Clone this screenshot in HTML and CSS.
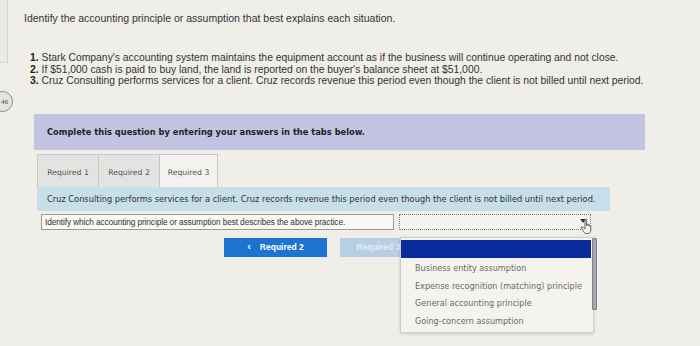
FILE: index.html
```html
<!DOCTYPE html>
<html lang="en">
<head>
    <meta charset="UTF-8">
    <title>Question 46</title>
    <link rel="stylesheet" href="styles.css">
</head>
<body>
    <div class="side-panel"></div>
    <div class="q-badge">46</div>

    <div class="content">
        <h1 class="prompt">Identify the accounting principle or assumption that best explains each situation.</h1>

        <ol class="situations">
            <li><b>1.</b> Stark Company's accounting system maintains the equipment account as if the business will continue operating and not close.</li>
            <li><b>2.</b> If $51,000 cash is paid to buy land, the land is reported on the buyer's balance sheet at $51,000.</li>
            <li><b>3.</b> Cruz Consulting performs services for a client. Cruz records revenue this period even though the client is not billed until next period.</li>
        </ol>

        <div class="banner">Complete this question by entering your answers in the tabs below.</div>

        <div class="tabs">
            <div class="tab">Required 1</div>
            <div class="tab">Required 2</div>
            <div class="tab active">Required 3</div>
        </div>

        <div class="question">Cruz Consulting performs services for a client. Cruz records revenue this period even though the client is not billed until next period.</div>

        <div class="answer-row">
            <div class="answer-label">Identify which accounting principle or assumption best describes the above practice.</div>
            <div class="answer-select">
                <span class="select-arrow"></span>
            </div>
        </div>

        <div class="nav-row">
            <div class="btn btn-prev"><span class="chev">&lsaquo;</span> Required 2</div>
            <div class="btn btn-next">Required 3 &rsaquo;</div>
        </div>
    </div>

    <!-- open select menu -->
    <div class="dropdown">
        <div class="dropdown-selected"></div>
        <ul class="dropdown-items">
            <li>Business entity assumption</li>
            <li>Expense recognition (matching) principle</li>
            <li>General accounting principle</li>
            <li>Going-concern assumption</li>
        </ul>
        <div class="dropdown-scroll"><div class="dropdown-thumb"></div></div>
    </div>

    <svg class="cursor" viewBox="0 0 14 17" width="14" height="17">
        <path d="M5 1.5c0-.8 1.4-.8 1.4 0v6l.2-1.2c.2-.7 1.3-.6 1.3.1v1.3l.2-.8c.2-.7 1.3-.6 1.3.1v1.2l.2-.5c.3-.6 1.2-.4 1.2.2v4.3c0 1.8-1.2 3.3-3 3.3H6.2c-1 0-1.7-.5-2.3-1.300L1.2 9.8c-.4-.6.4-1.4 1-.9L5 11z" fill="#f4f4f2" stroke="#555" stroke-width="0.9" stroke-linejoin="round"/>
    </svg>
</body>
</html>
```

FILE: styles.css
```css
* {
    box-sizing: border-box;
}

body {
    margin: 0;
    width: 700px;
    height: 346px;
    overflow: hidden;
    position: relative;
    background-color: #efeee9;
    font-family: 'Liberation Sans', Arial, sans-serif;
    color: #333;
}

.side-panel {
    position: absolute;
    left: 0;
    top: 0;
    width: 8px;
    height: 63px;
    border-right: 1px solid #d6d5d0;
    border-bottom: 1px solid #d6d5d0;
    background-color: #ebeae5;
}

.q-badge {
    position: absolute;
    left: -8px;
    top: 91px;
    width: 21px;
    height: 21px;
    border-radius: 50%;
    border: 1px solid #8a8a88;
    background-color: #e4e4e2;
    font-size: 6px;
    color: #444;
    display: flex;
    align-items: center;
    justify-content: flex-end;
    padding-right: 4px;
}

.content {
    padding: 12px 0 0 24px;
}

.prompt {
    margin: 0;
    font-size: 10.5px;
    line-height: 13px;
    font-weight: normal;
    color: #333;
}

.situations {
    list-style: none;
    margin: 27px 0 0 6px;
    padding: 0;
    font-size: 10.35px;
    line-height: 11.5px;
    color: #333;
}

.situations b {
    color: #222;
}

.banner {
    margin: 27px 0 0 10px;
    width: 611px;
    height: 36px;
    padding-left: 13px;
    display: flex;
    align-items: center;
    background-color: #c2c4e2;
    font-family: 'DejaVu Sans', Verdana, sans-serif;
    font-size: 8.3px;
    font-weight: bold;
    color: #222;
}

.tabs {
    display: flex;
    margin: 4px 0 0 13px;
}

.tab {
    width: 62px;
    height: 33px;
    display: flex;
    align-items: center;
    justify-content: center;
    padding-top: 3px;
    background-color: #e3e3e1;
    border: 1px solid #c9c9c6;
    border-bottom: none;
    font-family: 'DejaVu Sans', Verdana, sans-serif;
    font-size: 7.7px;
    color: #555;
}

.tab + .tab {
    margin-left: -1px;
}

.tab.active {
    width: 59px;
    background-color: #f3f2ee;
}

.question {
    margin-left: 13px;
    width: 573px;
    height: 24px;
    padding-left: 10px;
    display: flex;
    align-items: center;
    background-color: #c6dfe8;
    font-family: 'DejaVu Sans', Verdana, sans-serif;
    font-size: 8.25px;
    color: #333;
}

.answer-row {
    display: flex;
    gap: 5px;
    margin: 3px 0 0 17px;
}

.answer-label {
    width: 353px;
    height: 16px;
    padding-left: 3px;
    display: flex;
    align-items: center;
    border: 1px solid #9a9a98;
    background-color: #f8f8f5;
    font-size: 8.3px;
    letter-spacing: -0.1px;
    color: #333;
    white-space: nowrap;
}

.answer-select {
    position: relative;
    width: 192px;
    height: 16px;
    border: 1px dotted #777;
    background-color: #f5f4f0;
}

.select-arrow {
    position: absolute;
    right: 4px;
    top: 4px;
    border-left: 3px solid transparent;
    border-right: 3px solid transparent;
    border-top: 4px solid #333;
}

.nav-row {
    display: flex;
    gap: 13px;
    margin: 8px 0 0 200px;
}

.btn {
    height: 19px;
    display: flex;
    align-items: center;
    justify-content: center;
    font-size: 8.5px;
    font-weight: bold;
}

.btn-prev {
    width: 103px;
    background-color: #1c74d0;
    color: white;
}

.chev {
    font-size: 11px;
    margin-right: 9px;
    margin-top: -2px;
}

.btn-next {
    width: 82px;
    background-color: #b8cee5;
    color: #e2ebf4;
}

.dropdown {
    position: absolute;
    left: 400px;
    top: 237px;
    width: 194px;
    height: 96px;
    background-color: #f4f3ef;
    border: 1px solid #cfcfcc;
    box-shadow: 0 1px 3px rgba(0, 0, 0, 0.15);
}

.dropdown-selected {
    margin-top: 2px;
    width: 190px;
    height: 18px;
    background-color: #0a2b9b;
}

.dropdown-items {
    list-style: none;
    margin: 0;
    padding: 2px 0 0 14px;
    font-family: 'DejaVu Sans', Verdana, sans-serif;
    font-size: 8.1px;
    line-height: 17.5px;
    color: #6a6a6a;
    white-space: nowrap;
}

.dropdown-scroll {
    position: absolute;
    right: -4px;
    top: 0;
    width: 5px;
    height: 72px;
    background-color: #e8e8ec;
    border: 1px solid #7f7f88;
    border-radius: 1px;
}

.dropdown-thumb {
    width: 100%;
    height: 100%;
    background-color: #a9a9b6;
}

.cursor {
    position: absolute;
    left: 580px;
    top: 218px;
}
```
